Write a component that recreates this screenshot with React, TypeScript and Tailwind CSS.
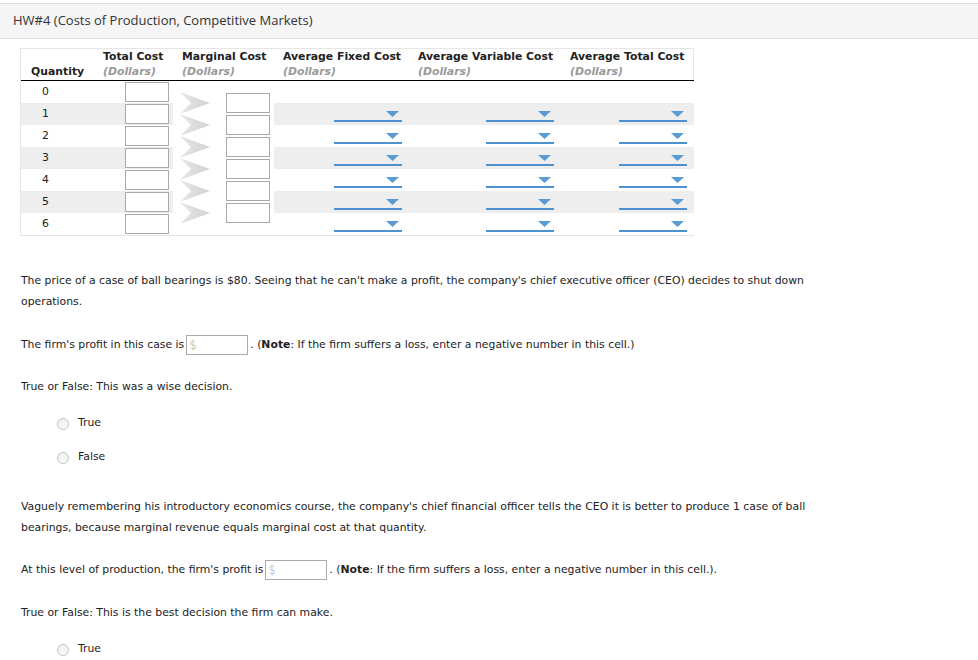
import React from 'react';

const rows = [0, 1, 2, 3, 4, 5, 6];

const font = { fontFamily: 'Verdana, "DejaVu Sans", sans-serif' };

function Arrow() {
  return (
    <svg width="34" height="22" viewBox="0 0 34 22" className="shrink-0">
      <defs>
        <linearGradient id="arrowFill" x1="0" x2="1" y1="0" y2="0">
          <stop offset="0" stopColor="#e6e6e6" />
          <stop offset="1" stopColor="#d3d3d3" />
        </linearGradient>
      </defs>
      <polygon points="1,0 31,11 1,22 12,11" fill="url(#arrowFill)" />
    </svg>
  );
}

function Dropdown() {
  return (
    <div className="relative ml-auto h-[22px] w-[68px]">
      <svg width="13" height="6" viewBox="0 0 13 6" className="absolute right-[3px] top-[8px]">
        <polygon points="0,0 13,0 6.5,6" fill="#5a9bd3" />
      </svg>
      <div className="absolute bottom-[3px] left-0 right-0 h-[2px] bg-[#4d92cf]" />
    </div>
  );
}

function Radio({ label }: { label: string }) {
  return (
    <div className="flex h-[21px] items-center pl-[57px]">
      <span className="h-[12px] w-[12px] rounded-full border border-[#c4c4c4] bg-gradient-to-b from-[#efefef] to-[#fbfbfb]" />
      <span className="ml-[9px]">{label}</span>
    </div>
  );
}

function MoneyInput() {
  return (
    <span className="mx-[2px] inline-flex h-[20px] w-[62px] items-center border border-[#a9a9a9] bg-white pl-[2px] align-middle text-[12px] font-light text-[#b0b0b0]">
      $
    </span>
  );
}

export default function App() {
  return (
    <div className="min-h-screen bg-white pt-[3px] text-[10.85px] text-[#222]" style={font}>
      <div className="flex h-[36px] items-center border-y border-[#dcdcdc] bg-[#f5f5f5] pl-[13px]">
        <span className="text-[13px] text-[#333]" style={{ fontFamily: '"Open Sans", sans-serif' }}>
          HW#4 (Costs of Production, Competitive Markets)
        </span>
      </div>

      <div className="ml-[20px] mt-[9px] w-[674px] border border-[#e6e6e6]">
        <div className="grid grid-cols-[78px_74px_101px_137px_151px_132px] grid-rows-[32px_repeat(7,22px)]">
          {/* header */}
          <div className="flex flex-col border-b border-black pl-[10px] font-bold leading-[15px]">
            <span>&nbsp;</span>
            <span>Quantity</span>
          </div>
          {[
            ['Total Cost', 'pl-[4px]'],
            ['Marginal Cost', 'pl-[9px]'],
            ['Average Fixed Cost', 'pl-[9px]'],
            ['Average Variable Cost', 'pl-[7px]'],
            ['Average Total Cost', 'pl-[8px]'],
          ].map(([title, pad]) => (
            <div key={title} className={`flex flex-col border-b border-black leading-[15px] ${pad}`}>
              <span className="font-bold whitespace-nowrap">{title}</span>
              <span className="font-bold italic text-[#999]">(Dollars)</span>
            </div>
          ))}

          {/* marginal cost column, offset half a row */}
          <div className="col-start-3 row-start-2 row-span-7 flex flex-col pt-[11px] pl-[6px]">
            {rows.slice(1).map((r) => (
              <div key={r} className="flex h-[22px] items-center">
                <Arrow />
                <div className="ml-[13px] h-[20px] w-[44px] border border-[#a9a9a9] bg-white" />
              </div>
            ))}
          </div>

          {rows.map((r) => {
            const bg = r % 2 === 1 ? 'bg-[#eeeeee]' : 'bg-white';
            return (
              <React.Fragment key={r}>
                <div className={`flex items-center pl-[21px] ${bg}`}>{r}</div>
                <div className={`flex items-center pl-[26px] ${bg}`}>
                  <div className="h-[20px] w-[44px] border border-[#a9a9a9] bg-white" />
                </div>
                <div className={`flex items-center pr-[9px] ${bg}`}>{r > 0 && <Dropdown />}</div>
                <div className={`flex items-center pr-[8px] ${bg}`}>{r > 0 && <Dropdown />}</div>
                <div className={`flex items-center pr-[7px] ${bg}`}>{r > 0 && <Dropdown />}</div>
              </React.Fragment>
            );
          })}
        </div>
      </div>

      <div className="ml-[21px] w-[800px] leading-[21px]">
        <p className="mt-[34px]">
          The price of a case of ball bearings is $80. Seeing that he can't make a profit, the company's chief executive
          officer (CEO) decides to shut down operations.
        </p>
        <p className="mt-[22px]">
          The firm's profit in this case is
          <MoneyInput />. (<b>Note</b>: If the firm suffers a loss, enter a negative number in this cell.)
        </p>
        <p className="mt-[21px]">True or False: This was a wise decision.</p>
      </div>

      <div className="mt-[16px]">
        <Radio label="True" />
      </div>
      <div className="mt-[13px]">
        <Radio label="False" />
      </div>

      <div className="ml-[21px] w-[800px] leading-[21px]">
        <p className="mt-[28px]">
          Vaguely remembering his introductory economics course, the company's chief financial officer tells the CEO it
          is better to produce 1 case of ball bearings, because marginal revenue equals marginal cost at that quantity.
        </p>
        <p className="mt-[21px]">
          At this level of production, the firm's profit is
          <MoneyInput />. (<b>Note</b>: If the firm suffers a loss, enter a negative number in this cell.).
        </p>
        <p className="mt-[22px]">True or False: This is the best decision the firm can make.</p>
      </div>

      <div className="mt-[16px] pb-[20px]">
        <Radio label="True" />
      </div>
    </div>
  );
}
